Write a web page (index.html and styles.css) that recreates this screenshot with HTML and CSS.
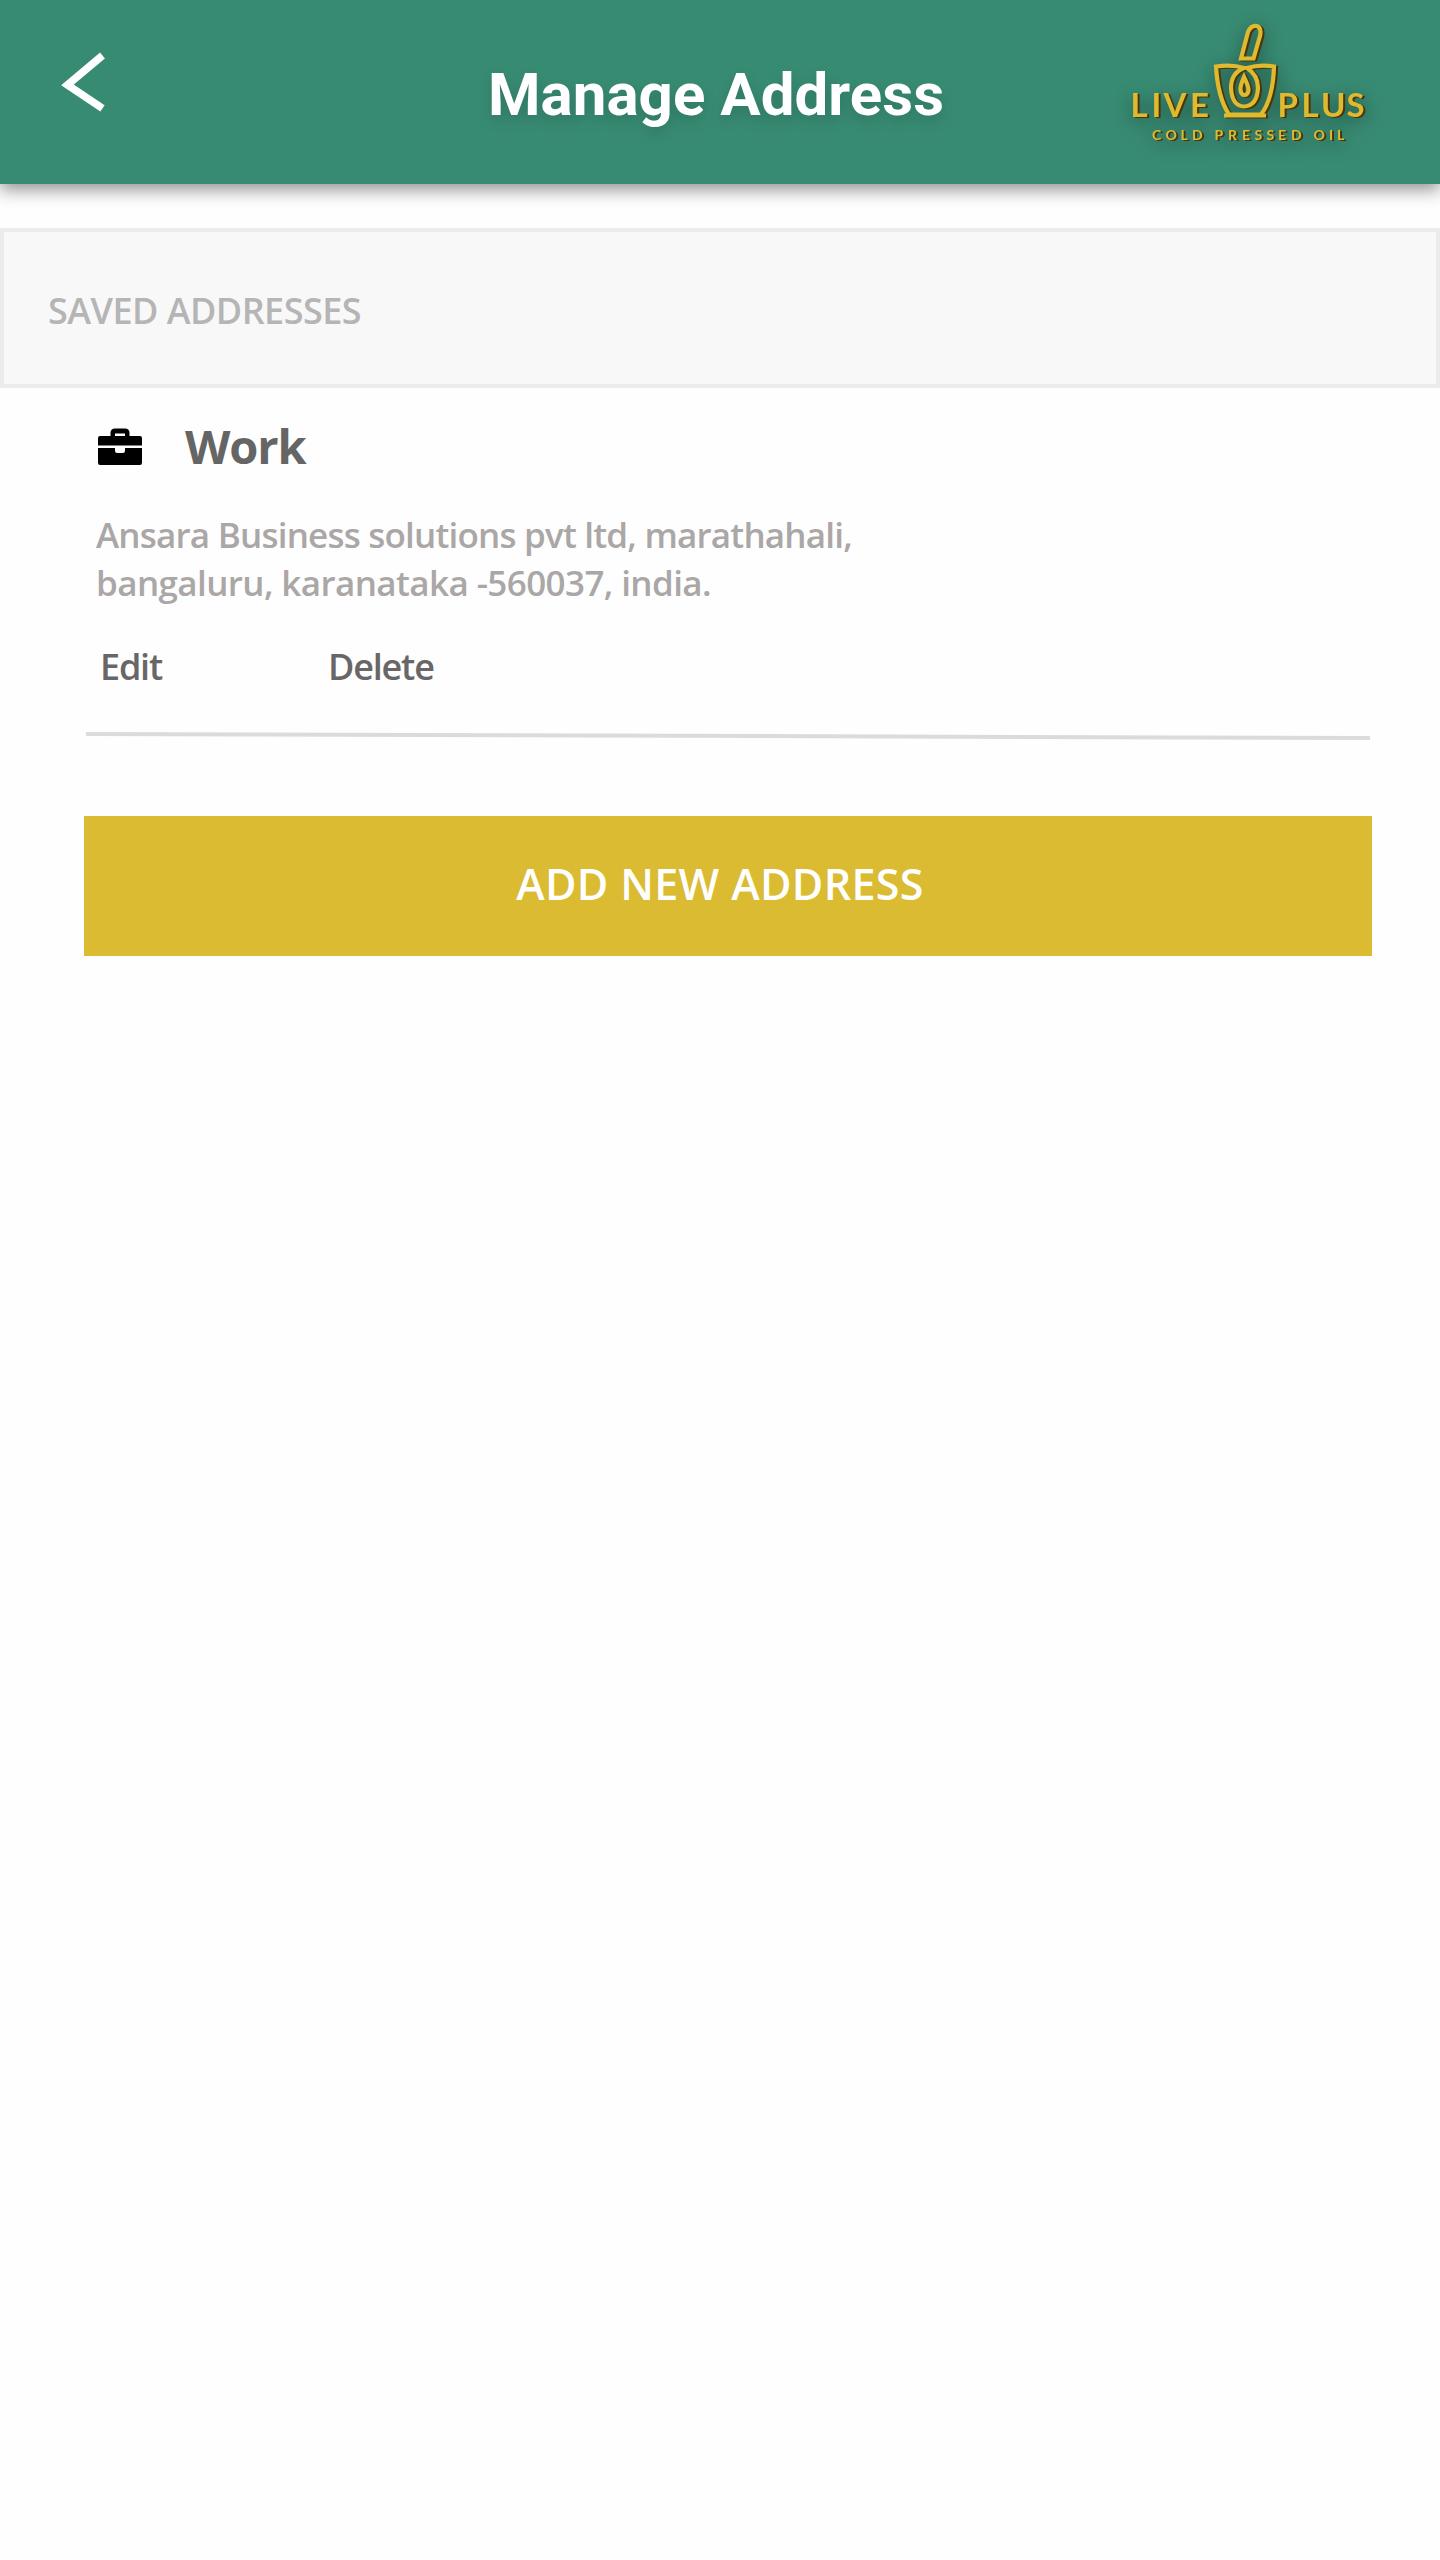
FILE: index.html
```html
<!DOCTYPE html>
<html lang="en">
<head>
<meta charset="utf-8">
<title>Manage Address</title>
<link rel="stylesheet" href="styles.css">
</head>
<body>
<header class="topbar">
  <a class="back" aria-label="Back">
    <svg width="46" height="64" viewBox="0 0 46 64"><path d="M41.500 5.500 6.500 34.800 41.500 58.300" fill="none" stroke="#fff" stroke-width="7.600"/></svg>
  </a>
  <h1 class="title">Manage Address</h1>
  <svg class="logo" width="280" height="160" viewBox="0 0 280 160">
    <g class="logo-art">
      <path d="M131 58.500 138 32Q141 25 147 26Q152 28 150 36L143.500 58.500Z"/>
      <path d="M106 66.500Q122 64 134 68Q121 73 121 88Q122 106 134 106.500Q147 106 148 88Q148 75 137 68Q150 64 164 66.500Q163 99 151 114.500H119Q108 98 106 66.500Z"/>
      <path d="M134 77Q130 86 130.500 90Q131 95 134.500 95Q138 95 138.500 90Q138.500 86 134 77Z"/>
      <path d="M114 115.500H156"/>
    </g>
    <g class="logo-name">
      <text x="20.500 41.500 53.500 80" y="117">LIVE</text>
      <text x="167.500 191.500 211 236.500" y="117">PLUS</text>
    </g>
    <text class="logo-tag" x="42 55.500 70.500 82 104.500 118 132 144.500 156.500 168 181 203.500 219 227" y="140">COLDPRESSEDOIL</text>
  </svg>
</header>
<main>
  <h2 class="section">SAVED ADDRESSES</h2>
  <article class="address">
    <div class="kind">
      <svg width="44" height="38" viewBox="0 0 44 38">
        <path fill-rule="evenodd" d="M2 8H12.500V5Q12.500 .500 17 .500H27Q31.500 .500 31.500 5V8H42Q44 8 44 10V17.500H0V10Q0 8 2 8ZM17 8H27V5.500H17Z"/>
        <path d="M0 20H17V22.500Q17 25 19.500 25H24.500Q27 25 27 22.500V20H44V34.500Q44 37 42 37H2Q0 37 0 34.500Z"/>
      </svg>
      <h3>Work</h3>
    </div>
    <p class="lines"><span class="line1">Ansara Business solutions pvt ltd, marathahali,</span><br><span class="line2">bangaluru, karanataka -560037, india.</span></p>
    <div class="actions"><a class="edit">Edit</a><a class="delete">Delete</a></div>
    <svg class="divider" width="1284" height="8" viewBox="0 0 1284 8"><path d="M0 0 1284 4V8L0 4Z" fill="#dbdbdb"/></svg>
  </article>
  <button class="add">ADD NEW ADDRESS</button>
</main>
</body>
</html>
```
FILE: styles.css
```css
* { box-sizing: border-box; }
body {
  margin: 0;
  min-height: 2560px;
  background: #fefefe;
  font-family: "Open Sans", "Noto Sans", sans-serif;
}
h1, h2, h3, p { margin: 0; }
svg { display: block; flex: none; }
.topbar {
  display: flex;
  height: 184px;
  background: #388b73;
  box-shadow: 0 6px 16px rgba(0, 0, 0, .42);
}
.back { width: 428px; padding: 50px 0 0 61px; flex: none; }
.title {
  width: 622px;
  margin-left: 60px;
  padding-top: 59px;
  font: 700 60px/72px Roboto, sans-serif;
  letter-spacing: .05px;
  color: #fff;
  text-shadow: 0 6px 14px rgba(0, 0, 0, .15);
  white-space: nowrap;
}
.logo { overflow: visible; filter: drop-shadow(2px 1px 0 #4a3508) drop-shadow(0 4px 9px rgba(0, 0, 0, .4)); }
.logo-art { fill: none; stroke: #dfb92f; stroke-width: 4.200px; }
.logo-name { font: 700 33px Lato, sans-serif; fill: #dfb92f; }
.logo-tag { font: 700 14px Lato, sans-serif; fill: #dfb92f; }
.section {
  height: 160px;
  margin-top: 44px;
  padding: 55px 0 0 44px;
  border: 4px solid #ebebeb;
  background: #f8f8f8;
  color: #b5b5b5;
  font-size: 36px;
  font-weight: 600;
  line-height: 48px;
  letter-spacing: -.53px;
}
.address { padding: 25px 70px 0 86px; }
.kind { display: flex; gap: 43px; height: 98px; padding-left: 12px; }
.kind svg { margin-top: 15px; }
.kind h3 { padding-top: 1px; font-size: 47px; line-height: 64px; letter-spacing: -1.1px; color: #656565; }
.lines { padding-left: 10px; font-size: 35px; font-weight: 600; line-height: 48px; color: #aaa7a6; white-space: nowrap; }
.line1 { letter-spacing: -.79px; }
.line2 { letter-spacing: -.6px; }
.actions { display: flex; height: 125px; padding: 36px 0 0 14px; font-size: 36px; font-weight: 600; line-height: 48px; letter-spacing: -1.2px; color: #686666; }
.edit { width: 228px; }
.add {
  display: block;
  width: 1288px;
  height: 140px;
  margin: 76px 0 0 84px;
  padding: 0 16px 4px 0;
  border: 0;
  background: #dabb32;
  color: #fff;
  font: 600 43px/60px "Open Sans", sans-serif;
  letter-spacing: .35px;
}
```
